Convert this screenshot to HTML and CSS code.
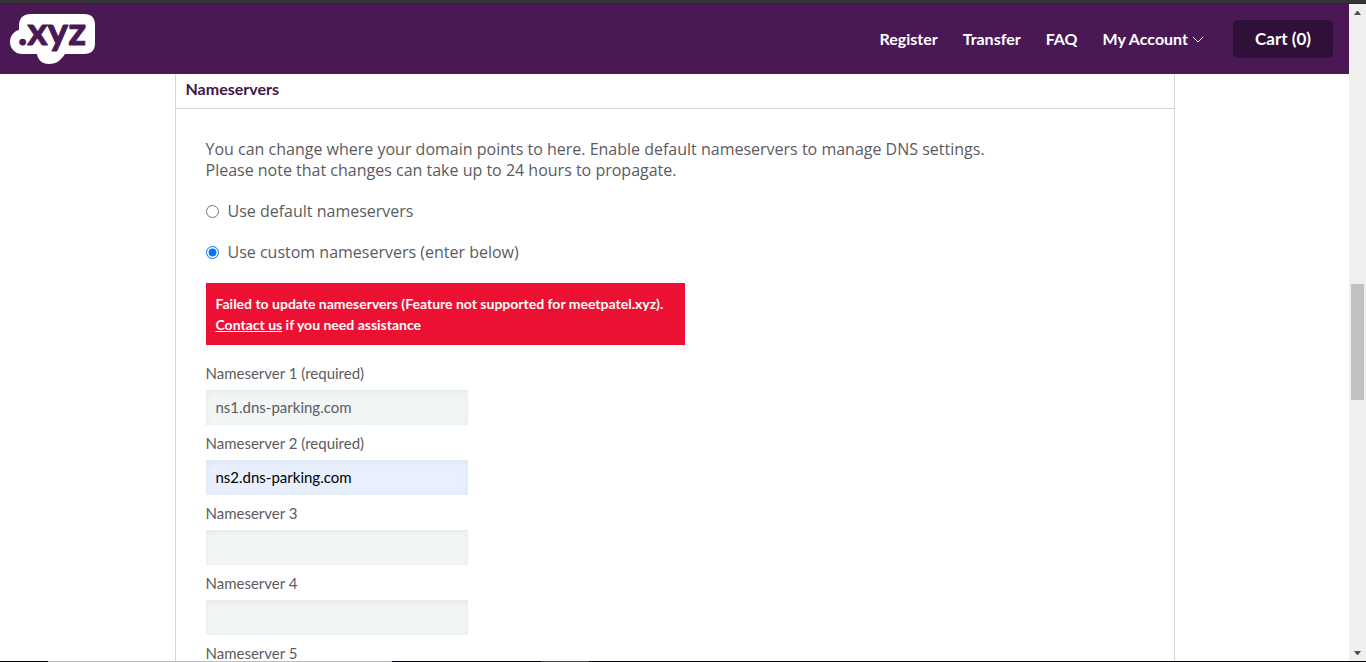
FILE: index.html
```html
<!DOCTYPE html>
<html lang="en">
<head>
<meta charset="utf-8">
<meta name="viewport" content="width=device-width, initial-scale=1">
<title>Nameservers - .xyz</title>
<link rel="stylesheet" href="styles.css">
</head>
<body>
<div class="window-edge"></div>
<div class="viewport">
  <div class="page">
    <header class="site-header">
      <a class="logo" href="#" aria-label=".xyz home">
        <svg width="90" height="66" viewBox="0 -8 90 66">
          <path fill="#fff" d="M21 0H74Q85 0 85 11V29Q85 40 74 40H55C51 46 47 50 39 50C32 50 28 46 27 40H12A12 12 0 0 1 0 28C0 22 4 17 9 16V12Q9 0 21 0Z"/>
          <text class="logo-text" x="8" y="31">.xyz</text>
        </svg>
      </a>
      <nav class="nav">
        <a href="#">Register</a>
        <a href="#">Transfer</a>
        <a href="#">FAQ</a>
        <a class="account" href="#">My Account
          <svg width="12" height="8" viewBox="0 0 12 8"><path d="M1 2L6 7L11 2" fill="none" stroke="#fff" stroke-width="1"/></svg>
        </a>
        <a class="cart" href="#">Cart (0)</a>
      </nav>
    </header>
    <main class="panel">
      <h2 class="panel-title">Nameservers</h2>
      <form class="panel-body">
        <p class="intro">You can change where your domain points to here. Enable default nameservers to manage DNS settings.<br>Please note that changes can take up to 24 hours to propagate.</p>
        <label class="choice"><input type="radio" name="mode">Use default nameservers</label>
        <label class="choice"><input type="radio" name="mode" checked>Use custom nameservers (enter below)</label>
        <p class="alert">Failed to update nameservers (Feature not supported for meetpatel.xyz).<br><a href="#">Contact us</a> if you need assistance</p>
        <div class="fields">
          <div class="field"><label for="ns1">Nameserver 1 (required)</label><input id="ns1" type="text" value="ns1.dns-parking.com"></div>
          <div class="field"><label for="ns2">Nameserver 2 (required)</label><input id="ns2" class="autofilled" type="text" value="ns2.dns-parking.com"></div>
          <div class="field"><label for="ns3">Nameserver 3</label><input id="ns3" type="text"></div>
          <div class="field"><label for="ns4">Nameserver 4</label><input id="ns4" type="text"></div>
          <div class="field"><label for="ns5">Nameserver 5</label><input id="ns5" type="text"></div>
        </div>
      </form>
    </main>
  </div>
  <div class="scrollbar">
    <svg width="7" height="4" viewBox="0 0 7 4"><path d="M0 4L3 0H4L7 4Z" fill="#505050"/></svg>
    <div class="track"><div class="thumb"></div></div>
    <svg width="7" height="4" viewBox="0 0 7 4"><path d="M0 0H7L4 4H3Z" fill="#505050"/></svg>
  </div>
</div>
<div class="taskbar-edge"></div>
</body>
</html>
```
FILE: styles.css
```css
* { box-sizing: border-box; }
body {
  margin: 0;
  height: 100vh;
  display: flex;
  flex-direction: column;
  overflow: hidden;
  background: #fff;
  color: #5b5b5f;
  font: 16px/21px "Open Sans", sans-serif;
}
.window-edge { flex: none; height: 4px; background: #353535; border-bottom: 1px solid #2a2a2a; }
.viewport { flex: 1; min-height: 0; display: flex; }
.page { flex: 1; min-width: 0; overflow: hidden; }
.site-header {
  height: 70px;
  padding: 0 16px 0 10px;
  display: flex;
  align-items: center;
  justify-content: space-between;
  background: #4a1854;
}
.logo svg { display: block; }
.logo-text {
  font: 700 39px "Lato", sans-serif;
  fill: #4a1854;
  stroke: #4a1854;
  stroke-width: 1px;
  stroke-linejoin: round;
}
.nav { display: flex; align-items: center; gap: 25px; }
.nav a { padding-bottom: 1px; color: #fff; font: 700 16px/21px "Lato", sans-serif; text-decoration: none; }
.nav .account { display: flex; align-items: center; gap: 4px; margin-right: 4px; }
.nav .cart {
  width: 100px;
  padding: 8px 0 9px;
  border-radius: 5px;
  background: #2e1038;
  font-size: 17px;
  text-align: center;
}
.panel {
  max-width: 1000px;
  margin: 0 auto;
  border: solid #d5d5d5;
  border-width: 0 1px;
}
.panel-title {
  margin: 0;
  padding: 4px 10px 9px;
  border-bottom: 1px solid #d5d5d5;
  color: #3f1548;
  font: 700 16px/21px "Lato", sans-serif;
}
.panel-body { padding: 30px; }
.intro { margin: 0 0 20px; }
.choice { display: flex; align-items: center; gap: 9px; margin-bottom: 20px; }
.choice input { width: 13px; height: 13px; margin: 0; }
.alert {
  max-width: 479px;
  margin: 0 0 18px;
  padding: 10px;
  background: #ec1133;
  color: #fff;
  font: 700 14px/21px "Lato", sans-serif;
}
.alert a { color: inherit; }
.fields { display: grid; gap: 8px; width: 262px; }
.field { display: grid; gap: 6px; }
.field label, .field input { font: 15px/21px "Lato", sans-serif; }
.field input {
  width: 100%;
  height: 35px;
  padding: 0 10px 1px;
  border: 0;
  border-radius: 0;
  background: #f1f5f6;
  box-shadow: inset 0 2px 6px rgba(0, 0, 0, 0.05);
  color: #5b5b5f;
}
.field .autofilled { background: #e8f0fe; color: #000; }
.scrollbar {
  flex: none;
  width: 17px;
  padding: 7px 0 6px;
  display: flex;
  flex-direction: column;
  align-items: center;
  background: #f0f0f0;
}
.track { flex: 1; width: 13px; padding: 269px 0 0; }
.thumb { height: 116px; background: #c1c1c1; }
.taskbar-edge {
  flex: none;
  height: 1px;
  background: linear-gradient(90deg, #000 48px, #bbb 48px 392px, #050510 392px 541px, #444 541px 589px, #050510 589px);
}
```
